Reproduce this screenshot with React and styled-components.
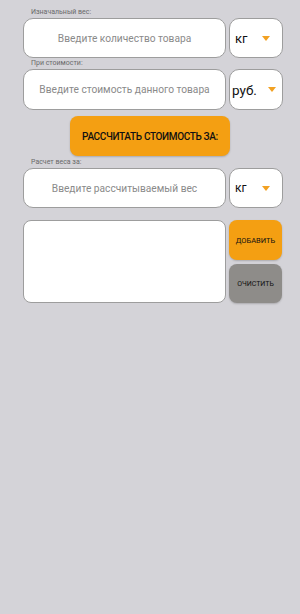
import React from "react";
import styled, { createGlobalStyle } from "styled-components";

const Global = createGlobalStyle`
  html, body { margin: 0; padding: 0; background: #d4d3d8; }
  body { font-family: Roboto, "Noto Sans", sans-serif; }
  * { box-sizing: border-box; }
`;

const Page = styled.div`
  width: 300px;
  min-height: 614px;
  background: #d4d3d8;
  padding: 7px 17px 0 23px;
  display: flex;
  flex-direction: column;
`;

const Group = styled.div`
  display: flex;
  flex-direction: column;
  margin-top: ${(p) => p.$mt || 0}px;
`;

const Label = styled.div`
  height: 11px;
  line-height: 11px;
  font-size: 7px;
  color: #6a6a6a;
  padding-left: 8px;
`;

const Row = styled.div`
  display: flex;
  gap: 3px;
  height: ${(p) => p.$h || 40}px;
`;

const Input = styled.div`
  flex: 0 0 203px;
  background: #fff;
  border: 1px solid #9d9d9d;
  border-radius: 10px;
  display: flex;
  align-items: center;
  justify-content: center;
  font-size: 10.2px;
  color: #8a8a8a;
`;

const Select = styled.div`
  flex: 0 0 54px;
  background: #fff;
  border: 1px solid #9d9d9d;
  border-radius: 10px;
  display: flex;
  align-items: center;
  justify-content: space-between;
  padding: 0 ${(p) => p.$pr || 12}px 0 ${(p) => p.$pl || 5}px;
  font-size: ${(p) => p.$fs || 13}px;
  color: #111;
`;

const Caret = styled.span`
  width: 0;
  height: 0;
  border-left: 4px solid transparent;
  border-right: 4px solid transparent;
  border-top: 5px solid #f2a122;
`;

const CalcWrap = styled.div`
  display: flex;
  padding-left: 47px;
  margin-top: 6px;
`;

const CalcButton = styled.div`
  width: 160px;
  height: 40px;
  background: #f49f12;
  border-radius: 8px;
  box-shadow: 0 1px 2px rgba(0,0,0,0.2);
  display: flex;
  align-items: center;
  justify-content: center;
  font-size: 10px;
  font-weight: 500;
  letter-spacing: -0.35px;
  color: #111;
`;

const Bottom = styled.div`
  display: flex;
  gap: 3px;
  margin-top: 12px;
`;

const Output = styled.div`
  flex: 0 0 203px;
  height: 83px;
  background: #fff;
  border: 1px solid #9d9d9d;
  border-radius: 8px;
`;

const Side = styled.div`
  display: flex;
  flex-direction: column;
  gap: 4px;
`;

const SmallButton = styled.div`
  width: 53px;
  height: ${(p) => p.$h}px;
  border-radius: 8px;
  background: ${(p) => p.$bg};
  box-shadow: 0 1px 2px rgba(0,0,0,0.2);
  display: flex;
  align-items: center;
  justify-content: center;
  font-size: ${(p) => p.$fs || 7.5}px;
  color: #111;
`;

export default function App() {
  return (
    <>
      <Global />
      <Page>
        <Group>
          <Label>Изначальный вес:</Label>
          <Row>
            <Input>Введите количество товара</Input>
            <Select>кг<Caret /></Select>
          </Row>
        </Group>
        <Group>
          <Label>При стоимости:</Label>
          <Row $h={41}>
            <Input>Введите стоимость данного товара</Input>
            <Select $pl={2} $pr={6} $fs={13.5}>руб.<Caret /></Select>
          </Row>
        </Group>
        <CalcWrap>
          <CalcButton>РАССЧИТАТЬ СТОИМОСТЬ ЗА:</CalcButton>
        </CalcWrap>
        <Group $mt={1}>
          <Label>Расчет веса за:</Label>
          <Row>
            <Input>Введите рассчитываемый вес</Input>
            <Select $fs={12}>кг<Caret /></Select>
          </Row>
        </Group>
        <Bottom>
          <Output />
          <Side>
            <SmallButton $h={40} $bg="#f49f12">ДОБАВИТЬ</SmallButton>
            <SmallButton $h={39} $fs={7} $bg="#8e8c89">ОЧИСТИТЬ</SmallButton>
          </Side>
        </Bottom>
      </Page>
    </>
  );
}
